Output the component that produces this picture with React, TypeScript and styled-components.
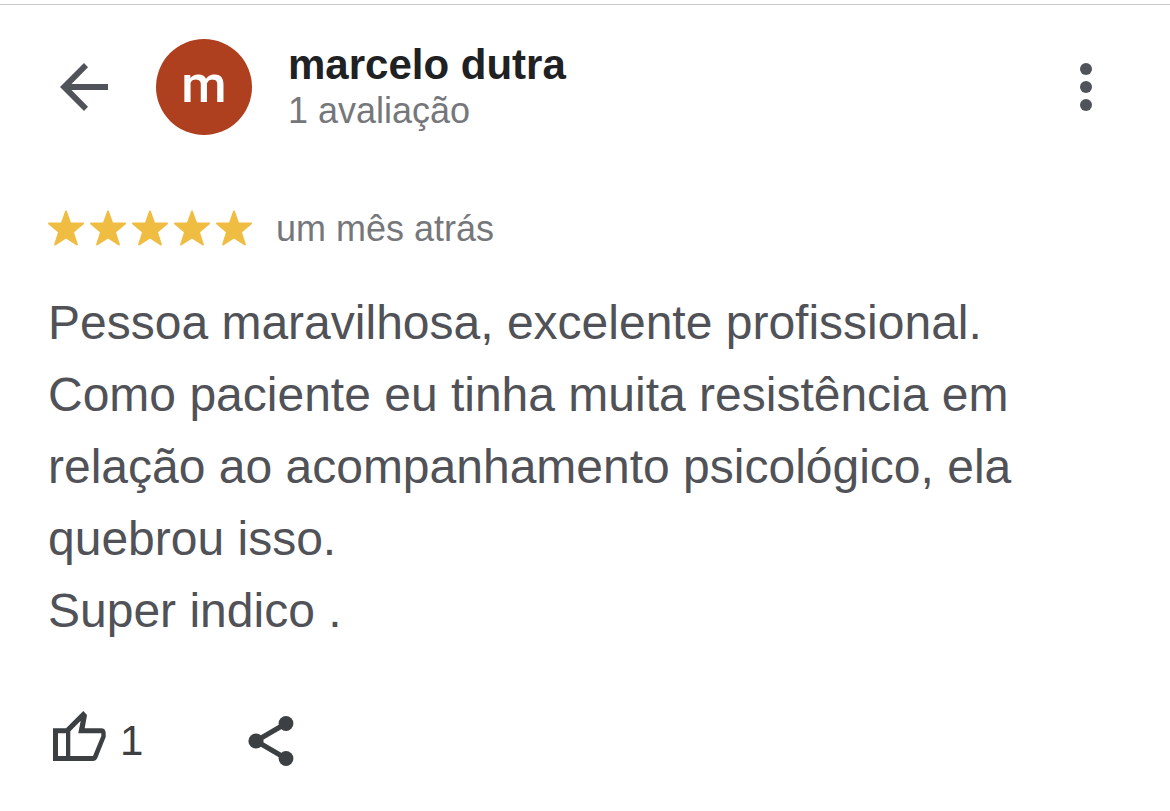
import React from "react";
import styled, { createGlobalStyle } from "styled-components";

const GlobalStyle = createGlobalStyle`
  * { box-sizing: border-box; }
  body {
    margin: 0;
    background: #fff;
    font-family: "Liberation Sans", Arial, sans-serif;
  }
`;

const Card = styled.article`
  border-top: 1px solid #c8c8c8;
  margin-top: 4px;
  padding: 34px 48px 40px;
`;

const Header = styled.header`
  display: flex;
  align-items: center;
`;

const IconButton = styled.button<{ $color?: string }>`
  display: flex;
  align-items: center;
  padding: 0;
  border: 0;
  background: none;
  color: ${(p) => p.$color ?? "#3c4043"};
  font: inherit;
  cursor: pointer;
`;

const Avatar = styled.div`
  display: flex;
  align-items: center;
  justify-content: center;
  width: 96px;
  height: 96px;
  margin: 0 36px;
  padding-bottom: 4px;
  border-radius: 50%;
  background: #ae4020;
  color: #fff;
  font-family: Roboto, sans-serif;
  font-size: 52px;
  font-weight: 500;
  line-height: 60px;
`;

const Author = styled.div`
  flex: 1;
`;

const Name = styled.h1`
  margin: 0;
  color: #202122;
  font-size: 42px;
  line-height: 48px;
`;

const Meta = styled.p`
  margin: 0;
  color: #75777b;
  font-size: 36px;
  line-height: 44px;
`;

const Rating = styled.div`
  display: flex;
  align-items: center;
  gap: 24px;
  margin-top: 72px;
`;

const Stars = styled.div`
  display: flex;
  gap: 6px;
`;

const Review = styled.p`
  margin: 36px 0 0;
  color: #505257;
  font-size: 48px;
  line-height: 72px;
  white-space: pre-line;
`;

const Actions = styled.footer`
  display: flex;
  align-items: center;
  gap: 104px;
  margin-top: 64px;
`;

const Count = styled.span`
  margin-left: 12px;
  font-size: 42px;
  line-height: 48px;
`;

const Star = () => (
  <svg width="36" height="38" viewBox="0 0 36 38" fill="#f0bd43" stroke="#f0bd43" strokeWidth="2" strokeLinejoin="round" aria-hidden="true">
    <path d="M18 1.500L22.200 13.300L35 13.600L24.900 22L28.900 34.500L18 27.300L7.100 34.500L11.100 22L1 13.600L13.800 13.300Z" />
  </svg>
);

const text = `Pessoa maravilhosa, excelente profissional.
Como paciente eu tinha muita resistência em relação ao acompanhamento psicológico, ela quebrou isso.
Super indico .`;

export default function App() {
  return (
    <>
      <GlobalStyle />
      <Card>
        <Header>
          <IconButton $color="#505359" aria-label="Voltar">
            <svg width="72" height="48" viewBox="0 0 72 48" fill="currentColor">
              <path d="M60 21H23.500L40 4.200L36 0L12 24L36 48L40 43.800L23.500 27H60Z" />
            </svg>
          </IconButton>
          <Avatar>m</Avatar>
          <Author>
            <Name>marcelo dutra</Name>
            <Meta>1 avaliação</Meta>
          </Author>
          <IconButton $color="#505359" aria-label="Mais opções">
            <svg width="72" height="48" viewBox="0 0 72 48" fill="currentColor">
              <circle cx="36" cy="6" r="6" />
              <circle cx="36" cy="24" r="6" />
              <circle cx="36" cy="42" r="6" />
            </svg>
          </IconButton>
        </Header>
        <Rating>
          <Stars role="img" aria-label="5 estrelas">
            {[1, 2, 3, 4, 5].map((n) => <Star key={n} />)}
          </Stars>
          <Meta>um mês atrás</Meta>
        </Rating>
        <Review>{text}</Review>
        <Actions>
          <IconButton aria-label="Útil, 1">
            <svg width="60" height="60" viewBox="0 0 60 60" fill="currentColor" fillRule="evenodd">
              <path d="M5 17.300H18L35.300 0L39 4L36.700 17.300H53Q57.700 17.300 57.700 22V26L49.300 47Q48 50 45 50H5ZM10 22.300V45H18V22.300ZM22.300 45H45L53.300 25V22.300H30.300L32.700 9.700L22.300 20.300Z" />
            </svg>
            <Count>1</Count>
          </IconButton>
          <IconButton aria-label="Compartilhar">
            <svg width="48" height="52" viewBox="0 0 48 52" fill="currentColor">
              <path d="M39 8.500L9 26l30 17.500" fill="none" stroke="currentColor" strokeWidth="5" />
              <circle cx="39" cy="8.500" r="7.400" />
              <circle cx="9" cy="26" r="7.600" />
              <circle cx="39" cy="43.500" r="7.400" />
            </svg>
          </IconButton>
        </Actions>
      </Card>
    </>
  );
}
